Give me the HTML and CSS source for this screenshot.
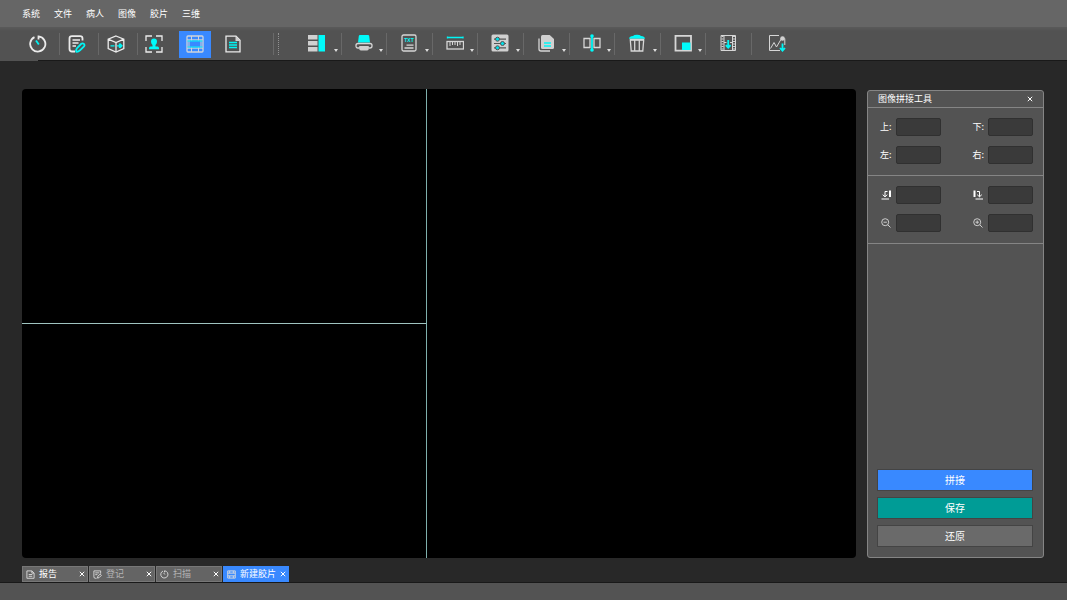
FILE: index.html
```html
<!DOCTYPE html>
<html lang="zh-CN">
<head>
<meta charset="utf-8">
<title>新建胶片</title>
<link rel="stylesheet" href="styles.css">
</head>
<body>
<nav class="menu">
  <button>系统</button><button>文件</button><button>病人</button><button>图像</button><button>胶片</button><button>三维</button>
</nav>

<div class="toolbar">
  <div class="modes">
    <button class="mode ruled" aria-label="扫描"><svg class="icon" viewBox="0 0 18 18"><path d="M5.500 2.100A7.600 7.600 0 1 0 9.500 1.400V4.500" class="line bold"/><path d="M7 5.500l2.800 4" class="cyan-line bold"/></svg></button>
    <button class="mode ruled" aria-label="登记"><svg class="icon" viewBox="0 0 18 18"><path d="M7 16.500H4Q1.500 16.500 1.500 14V3.500Q1.500 1.200 4 1.200H12Q14.500 1.200 14.500 3.500V5.500" class="line bold"/><path d="M4.500 5h7.500M4.500 8h6M4.500 11h3.500" class="line"/><path d="M9.300 12.800l4-4q1.300-1 2.600.1 1.100 1.200.1 2.400l-4 4q-2.200 1.900-3.800 1.300-.5-1.800 1.100-3.800z" class="cyan-line bold"/></svg></button>
    <button class="mode ruled" aria-label="三维"><svg class="icon" viewBox="0 0 18 18"><path d="M9 1L16.800 4.200V13.600L9 17 1.200 13.600V4.200zM1.200 4.200L9 7.600l7.800-3.400M9 7.600V17" class="line"/><path d="M3.500 10.800h4M10 10.800h5M12.500 8.600v4.400M13 8.800l2 2-2 2" class="cyan-line"/></svg></button>
    <button class="mode" aria-label="病人"><svg class="icon" viewBox="0 0 18 18"><path d="M1 6V1h6M11 1h6v5M17 12v5h-6M7 17H1v-5" class="line"/><path d="M9 3.500q3 0 3 3.200 0 2-1.500 3.300v1.500h2q1.500.2 1.500 1.700v1H4v-1q0-1.500 1.500-1.700h2V10Q6 8.700 6 6.700q0-3.200 3-3.200z" class="cyan"/></svg></button>
    <button class="mode active" aria-label="胶片"><svg class="icon" viewBox="0 0 18 18"><rect x="1" y="1" width="16" height="16" rx="1" class="line"/><path d="M5.500 1v4.500M12.500 1v4.500M5.500 12.500V17M12.500 12.500V17M3 5v8M15 5v8M1 4.800h16M1 13.200h16" class="line thin"/><path d="M1.500 6h15M1.500 12h15" class="cyan-line thin"/></svg></button>
    <button class="mode report" aria-label="报告"><svg class="icon" viewBox="0 0 18 18"><path d="M2 1.200H12l4 4v11.600H2z" class="line"/><path d="M11.500 1l5 5h-5z" class="solid"/><path d="M5 7.500h8M5 10h8M5 12.500h8" class="cyan-line"/></svg></button>
  </div>
  <div class="grip"></div>
  <div class="tools">
    <button class="tool drop wide" aria-label="布局"><svg class="icon" viewBox="0 0 18 18"><path d="M0 1h9.500v4.500H0zM0 7h9.500v4.500H0zM0 13h9.500v4.500H0z" class="solid"/><path d="M10.500 1H17v16.500h-6.500z" class="cyan"/></svg></button>
    <button class="tool drop" aria-label="打印"><svg class="icon" viewBox="0 0 18 18"><path d="M5 1h8q1 0 1.200 1l.8 6.500H3L3.800 2Q4 1 5 1z" class="cyan"/><path d="M4 14H3Q1 14 1 12v-.5q0-2 2-2h12q2 0 2 2v.5q0 2-2 2h-1" class="line"/><path d="M5 12h8q1 0 1 1 0 3.500-2 3.500H6Q4 16.500 4 13q0-1 1-1z" class="solid"/></svg></button>
    <button class="tool drop" aria-label="文本"><svg class="icon" viewBox="0 0 18 18"><rect x="2" y="1" width="14" height="16" rx="1.500" class="line"/><text x="9" y="8" text-anchor="middle" class="cyan txt">TXT</text><path d="M6.500 11.200h7M4.500 14h9" class="line"/></svg></button>
    <button class="tool drop" aria-label="测量"><svg class="icon" viewBox="0 0 18 18"><path d="M1 3.500h16.500M1.500 2.500v2M17 2.500v2" class="cyan-line"/><rect x="1" y="7.500" width="16.500" height="7.500" class="line"/><path d="M4 8v4M6.500 8v3M9 8v3M11.500 8v4M14 8v3" class="line thin"/></svg></button>
    <button class="tool drop" aria-label="调节"><svg class="icon" viewBox="0 0 18 18"><rect x=".5" y=".5" width="17" height="17" rx="1.500" class="solid"/><path d="M3 5.200h12M3 9.500h12M3 13.800h12" class="dark-line"/><g class="knob"><circle cx="6.500" cy="5.200" r="2"/><circle cx="11.500" cy="9.500" r="2"/><circle cx="6.500" cy="13.800" r="2"/></g></svg></button>
    <button class="tool drop" aria-label="复制"><svg class="icon" viewBox="0 0 18 18"><path d="M2 4.500V15q0 2 2 2h9" class="line"/><path d="M5.500 1h7.200L17 5v8.500q0 1.500-1.500 1.500h-10Q4 15 4 13.500v-11Q4 1 5.500 1z" class="solid"/><path d="M7 9h7M7 12h7" class="cyan-line"/></svg></button>
    <button class="tool drop" aria-label="翻转"><svg class="icon" viewBox="0 0 18 18"><path d="M7 4.500H1v9h6zM11 4.500h6v9h-6z" class="line"/><path d="M9 1v16" class="cyan-line bold"/><circle cx="9" cy="2" r="1.800" class="cyan"/><circle cx="9" cy="16" r="1.800" class="cyan"/></svg></button>
    <button class="tool drop" aria-label="删除"><svg class="icon" viewBox="0 0 18 18"><path d="M1 4.800Q1.500 2 5 2 6 .8 9 .8T13 2q3.500 0 4 2.800z" class="cyan"/><path d="M2.300 6H15.700L14.800 17H3.200z" class="line"/><path d="M6.700 6v11M11.300 6v11M2 5.500h14" class="line"/></svg></button>
    <button class="tool drop" aria-label="区域"><svg class="icon" viewBox="0 0 18 18"><path d="M1.500 1.800h15.500v14.900H1.500z" class="line bold"/><path d="M8 8.500h8.500V16H8z" class="cyan"/></svg></button>
    <button class="tool" aria-label="导入胶片"><svg class="icon" viewBox="0 0 18 18"><path d="M2 1.500h14.500v15H2zM5 1.500v15M13.500 1.500v15" class="line thin"/><path d="M3.500 2v15M15 2v15" class="perf"/><path d="M5 8.500h2.500M11 8.500h2.500" class="line thin"/><path d="M9.200 6v7.500M6.800 11.200l2.400 2.500 2.400-2.500" class="cyan-line bold"/></svg></button>
  </div>
  <button class="tool last" aria-label="导出图像"><svg class="icon" viewBox="0 0 18 18"><path d="M11 1.500H1.500v15H12M16.800 4.500V11" class="line thin"/><path d="M2.500 14.500l3.500-6 2.500 4.500 5-8.500" class="line thin"/><circle cx="14.500" cy="4.500" r="2.300" class="solid"/><path d="M14.500 9.500v7M12 14l2.500 2.700L17 14" class="cyan-line bold"/></svg></button>
</div>

<main class="work">
  <section class="film">
    <div class="cell first"></div>
    <div class="cell tall"></div>
    <div class="cell second"></div>
  </section>
  <aside class="panel">
    <header class="panel-head"><h1>图像拼接工具</h1><button class="close" aria-label="关闭"><svg viewBox="0 0 6 6"><path d="M.8 .8l4.400 4.400M5.200 .8L.8 5.200"/></svg></button></header>
    <div class="fields">
      <label>上:<input type="text"></label>
      <label>下:<input type="text"></label>
      <label>左:<input type="text"></label>
      <label>右:<input type="text"></label>
    </div>
    <div class="fields">
      <label><svg class="glyph" viewBox="0 0 12 12"><path d="M10 1.500V8" class="heavy"/><path d="M7.500 2.500H5v5.300M2.700 5.700l2.300 2.100 2.300-2.100M1.500 10h7.500"/></svg><input type="text" aria-label="左旋转"></label>
      <label><svg class="glyph" viewBox="0 0 12 12"><path d="M2.500 1.500V8" class="heavy"/><path d="M5 2.500h2.500v5.300M5.200 5.700l2.300 2.100 2.300-2.100M3.500 10H11"/></svg><input type="text" aria-label="右旋转"></label>
      <label><svg class="glyph zoom" viewBox="0 0 12 12"><circle cx="5.200" cy="5.200" r="3.500"/><path d="M3.500 5.200h3.400M7.800 7.800l2.700 2.700"/></svg><input type="text" aria-label="缩小"></label>
      <label><svg class="glyph zoom" viewBox="0 0 12 12"><circle cx="5.200" cy="5.200" r="3.500"/><path d="M3.500 5.200h3.400M5.200 3.500v3.400M7.800 7.800l2.700 2.700"/></svg><input type="text" aria-label="放大"></label>
    </div>
    <div class="actions">
      <button class="action join">拼接</button>
      <button class="action save">保存</button>
      <button class="action">还原</button>
    </div>
  </aside>
</main>

<div class="tabs">
  <div class="tab bright"><svg class="tab-icon" viewBox="0 0 10 10"><path d="M1 1h5.500L9 3.500V9.200H1zM6.500 1v2.500H9M3 5h4M3 7h4"/></svg><button class="name">报告</button><button class="close" aria-label="关闭报告"><svg viewBox="0 0 6 6"><path d="M.8 .8l4.400 4.400M5.200 .8L.8 5.200"/></svg></button></div>
  <div class="tab"><svg class="tab-icon" viewBox="0 0 10 10"><path d="M4 9.200H2.500Q1 9.200 1 7.500V1h7.500v3M2.500 3.200h4.500M2.500 5.200H5M5 9l.3-2 2.700-2.500L9.300 6 6.800 8.500z"/></svg><button class="name">登记</button><button class="close" aria-label="关闭登记"><svg viewBox="0 0 6 6"><path d="M.8 .8l4.400 4.400M5.200 .8L.8 5.200"/></svg></button></div>
  <div class="tab"><svg class="tab-icon" viewBox="0 0 10 10"><path d="M3.300 1.200A4 4 0 1 0 5 .9V2.600M4 3.200L5.400 5"/></svg><button class="name">扫描</button><button class="close" aria-label="关闭扫描"><svg viewBox="0 0 6 6"><path d="M.8 .8l4.400 4.400M5.200 .8L.8 5.200"/></svg></button></div>
  <div class="tab current"><svg class="tab-icon" viewBox="0 0 10 10"><path d="M.8 1h8.400v8H.8zM.8 3.500h8.400M.8 6.500h8.400M3 1v2.500M7 1v2.500M3 6.500V9M7 6.500V9"/></svg><button class="name">新建胶片</button><button class="close" aria-label="关闭新建胶片"><svg viewBox="0 0 6 6"><path d="M.8 .8l4.400 4.400M5.200 .8L.8 5.200"/></svg></button></div>
</div>
<footer class="status"></footer>
</body>
</html>
```

FILE: styles.css
```css
* {
  box-sizing: border-box;
}

body {
  margin: 0;
  min-height: 100vh;
  display: flex;
  flex-direction: column;
  background: #282828;
  color: #fff;
  font: 9px/16px "Noto Sans CJK SC", sans-serif;
}

button {
  margin: 0;
  padding: 0;
  border: 0;
  background: none;
  color: inherit;
  font: inherit;
  cursor: pointer;
}

svg {
  display: block;
  fill: none;
}

.menu {
  display: flex;
  align-items: center;
  gap: 14px;
  height: 27px;
  padding: 0 22px;
  background: #666;
}

.toolbar {
  position: relative;
  display: flex;
  align-items: center;
  height: 34px;
  padding-left: 21px;
  background: linear-gradient(#5a5a5a, #525252 4px);
}

.toolbar::after {
  content: "";
  position: absolute;
  left: 38px;
  right: 0;
  bottom: 0;
  height: 1px;
  background: #191919;
}

.icon {
  width: 18px;
  height: 18px;
  flex: none;
}

.line {
  stroke: #d6d6d6;
  stroke-width: 1.3;
}

.mode .line {
  stroke: #ebebeb;
}

.active .line {
  stroke: #d0d4da;
}

.cyan-line {
  stroke: #00f6f6;
  stroke-width: 1.3;
}

.bold {
  stroke-width: 1.8;
}

.thin {
  stroke-width: 1;
}

.solid {
  fill: #d0d0d0;
}

.cyan {
  fill: #00fafa;
}

.txt {
  font: bold 5px "Liberation Sans", sans-serif;
}

.dark-line {
  stroke: #555;
  stroke-width: 1.2;
}

.knob {
  fill: #00e0e8;
  stroke: #555;
  stroke-width: 1;
}

.perf {
  stroke: #d0d0d0;
  stroke-width: 2;
  stroke-dasharray: 1 1.5;
}

.modes {
  display: flex;
  align-items: center;
  width: 252px;
}

.mode {
  display: flex;
  align-items: center;
  justify-content: center;
  width: 32px;
  height: 27px;
}

.ruled {
  width: 39px;
  height: 22px;
  padding-right: 5px;
  border-right: 1px solid #686868;
}

.active {
  margin: 0 6px 0 9px;
  background: #3989ff;
}

.grip {
  width: 6px;
  height: 22px;
  border-left: 1px solid #6a6a6a;
  border-right: 1px dotted #929292;
}

.tools {
  display: grid;
  grid-template-columns: repeat(10, 1fr);
  width: 456px;
  margin-left: 17px;
}

.tool {
  position: relative;
  display: flex;
  align-items: center;
  height: 22px;
  padding: 0 0 2px 13px;
  border-right: 1px solid #686868;
}

.wide {
  padding-left: 12px;
}

.last {
  padding-left: 16px;
  border: 0;
}

.drop::after {
  content: "";
  position: absolute;
  right: 3px;
  bottom: 3px;
  border: 2px solid transparent;
  border-top: 3px solid #ddd;
  border-bottom: 0;
}

.work {
  flex: 1;
  display: flex;
  gap: 11px;
  padding: 28px 23px 8px 22px;
}

.film {
  flex: 1;
  display: grid;
  grid-template: 1fr 1fr / 405fr 429fr;
  overflow: hidden;
  border-radius: 4px;
  background: #000;
}

.tall {
  grid-row: span 2;
}

.first,
.second {
  border-right: 1px solid #7fb0ad;
}

.first {
  border-bottom: 1px solid #9fc4c0;
}

.panel {
  display: flex;
  flex-direction: column;
  width: 177px;
  margin-top: 1px;
  border: 1px solid #858585;
  border-radius: 3px;
  background: #535353;
}

.panel-head {
  display: flex;
  align-items: center;
  justify-content: space-between;
  height: 17px;
  padding: 0 10px;
  border-bottom: 1px solid #858585;
}

h1 {
  margin: 0;
  font: inherit;
}

.close {
  display: block;
  width: 6px;
}

.close svg {
  width: 6px;
  height: 6px;
  stroke: #fff;
}

.fields {
  display: grid;
  grid-template-columns: 1fr 1fr;
  column-gap: 30px;
  row-gap: 10px;
  padding: 10px 10px 11px;
  border-bottom: 1px solid #858585;
}

.fields label {
  display: flex;
  align-items: center;
  justify-content: flex-end;
  gap: 4px;
}

.fields input {
  width: 45px;
  height: 18px;
  padding: 0 4px;
  border: 1px solid #303030;
  border-radius: 2px;
  background: #3a3a3a;
  color: #fff;
  font: inherit;
}

.glyph {
  width: 12px;
  height: 12px;
  stroke: #fff;
}

.heavy {
  stroke-width: 2;
}

.zoom {
  stroke: #ccc;
}

.actions {
  display: grid;
  gap: 6px;
  margin-top: auto;
  padding: 0 10px 10px 9px;
}

.action {
  height: 22px;
  border: 1px solid #444;
  background: #6a6a6a;
  font-size: 10px;
  line-height: 20px;
}

.join {
  background: #3989ff;
}

.save {
  background: #009c96;
}

.tabs {
  display: flex;
  gap: 1px;
  padding-left: 22px;
}

.tab {
  display: flex;
  align-items: center;
  width: 66px;
  height: 16px;
  padding: 0 2px 0 3px;
  border: 1px solid #777;
  background: #646464;
  color: #b4b4b4;
}

.tab .close {
  margin-left: auto;
}

.tab-icon {
  width: 9px;
  height: 9px;
  margin-right: 4px;
  stroke: #ddd;
}

.bright {
  color: #fff;
}

.current {
  border-color: #3989ff;
  background: #3989ff;
  color: #fff;
}

.status {
  height: 18px;
  border-top: 1px solid #191919;
  background: #535353;
}
```
